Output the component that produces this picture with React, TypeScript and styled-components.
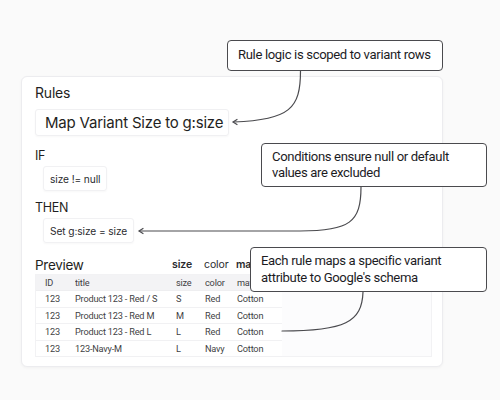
import styled, { createGlobalStyle } from 'styled-components';

const GlobalStyle = createGlobalStyle`
  body {
    margin: 0;
    background: #fafafa;
    font-family: Inter, "Noto Sans", sans-serif;
    color: #1f1f22;
  }
`;

const Page = styled.div`
  position: relative;
  width: 500px;
  height: 400px;
  overflow: hidden;
  box-sizing: border-box;
  padding: 76px 0 0 21px;
  background: #fafafa;
`;

const Card = styled.div`
  width: 422px;
  height: 291px;
  box-sizing: border-box;
  padding: 6px 11px 0 13px;
  background: #fff;
  border: 1px solid #ececef;
  border-radius: 6px;
  box-shadow: 0 1px 3px rgba(0, 0, 0, 0.04);
  display: flex;
  flex-direction: column;
`;

const Title = styled.div`
  font-size: 14px;
  line-height: 20px;
  letter-spacing: -0.2px;
`;

const Label = styled.div<{ $top: number }>`
  font-size: 12.5px;
  line-height: 18px;
  margin-top: ${(p) => p.$top}px;
  letter-spacing: -0.3px;
`;

const RuleName = styled.div`
  margin-top: 6px;
  width: 194px;
  height: 27px;
  box-sizing: border-box;
  padding-left: 9px;
  display: flex;
  align-items: center;
  font-size: 15px;
  letter-spacing: -0.2px;
  border: 1px solid #f0f0f2;
  border-radius: 3px;
  box-shadow: 0 1px 2px rgba(0, 0, 0, 0.03);
`;

const Chip = styled.div`
  margin: 1px 0 0 8px;
  align-self: flex-start;
  height: 25px;
  box-sizing: border-box;
  padding: 0 6px;
  display: flex;
  align-items: center;
  font-size: 10.2px;
  letter-spacing: -0.1px;
  color: #2a2a2e;
  border: 1px solid #f1f1f3;
  border-radius: 3px;
  box-shadow: 0 1px 2px rgba(0, 0, 0, 0.03);
`;

const PreviewHead = styled.div`
  margin-top: 9px;
  display: grid;
  grid-template-columns: 137px 32px 32px 14px;
  align-items: end;
  height: 21px;
`;

const PreviewTitle = styled.span`
  font-size: 13.5px;
  letter-spacing: -0.3px;
`;

const HeadLabel = styled.span<{ $bold?: boolean }>`
  font-size: 10.5px;
  font-weight: ${(p) => (p.$bold ? 600 : 400)};
  color: #2a2a2e;
  padding-bottom: 2px;
  letter-spacing: -0.1px;
  white-space: nowrap;
  overflow: hidden;
`;

const Table = styled.div`
  margin-top: 1px;
  width: 397px;
  height: 83px;
  background: #fcfcfd;
  border: 1px solid #f2f2f4;
  box-sizing: border-box;
`;

const Row = styled.div<{ $head?: boolean }>`
  display: grid;
  grid-template-columns: 30px 101px 29px 32px ${(p) => (p.$head ? '14px' : '45px')};
  align-items: center;
  height: ${(p) => (p.$head ? 16 : 16.5)}px;
  padding-left: 9px;
  width: ${(p) => (p.$head ? 'auto' : '246px')};
  box-sizing: border-box;
  background: ${(p) => (p.$head ? '#f3f3f5' : '#fff')};
  border-bottom: 1px solid ${(p) => (p.$head ? '#eeeef0' : '#f1f1f3')};
  font-family: Roboto, Inter, sans-serif;
  font-size: 9.2px;
  color: #3f3f44;
  letter-spacing: -0.2px;
  white-space: nowrap;
`;

const Cell = styled.span`
  overflow: hidden;
`;

const Callout = styled.div<{ $x: number; $y: number; $w: number; $h: number }>`
  position: absolute;
  left: ${(p) => p.$x}px;
  top: ${(p) => p.$y}px;
  width: ${(p) => p.$w}px;
  height: ${(p) => p.$h}px;
  box-sizing: border-box;
  padding: 0 10px;
  display: flex;
  flex-direction: column;
  justify-content: center;
  background: #fff;
  border: 1px solid #4a4a4e;
  border-radius: 4px;
  font-family: Roboto, Inter, sans-serif;
  font-size: 13.1px;
  line-height: 16.5px;
  letter-spacing: -0.35px;
  color: #1c1c1f;
  white-space: nowrap;
  z-index: 2;
`;

const Arrows = styled.svg`
  position: absolute;
  left: 0;
  top: 0;
  width: 500px;
  height: 400px;
  pointer-events: none;
  z-index: 1;
`;

const rows = [
  ['123', 'Product 123 - Red / S', 'S', 'Red', 'Cotton'],
  ['123', 'Product 123 - Red M', 'M', 'Red', 'Cotton'],
  ['123', 'Product 123 - Red L', 'L', 'Red', 'Cotton'],
  ['123', '123-Navy-M', 'L', 'Navy', 'Cotton'],
];

export default function App() {
  return (
    <Page>
      <GlobalStyle />
      <Card>
        <Title>Rules</Title>
        <RuleName>Map Variant Size to g:size</RuleName>
        <Label $top={11}>IF</Label>
        <Chip>size != null</Chip>
        <Label $top={8}>THEN</Label>
        <Chip>Set g:size = size</Chip>
        <PreviewHead>
          <PreviewTitle>Preview</PreviewTitle>
          <HeadLabel $bold>size</HeadLabel>
          <HeadLabel>color</HeadLabel>
          <HeadLabel $bold>material</HeadLabel>
        </PreviewHead>
        <Table>
          <Row $head>
            <Cell>ID</Cell>
            <Cell>title</Cell>
            <Cell>size</Cell>
            <Cell>color</Cell>
            <Cell>material</Cell>
          </Row>
          {rows.map((r, i) => (
            <Row key={i}>
              {r.map((c, j) => (
                <Cell key={j}>{c}</Cell>
              ))}
            </Row>
          ))}
        </Table>
      </Card>

      <Arrows viewBox="0 0 500 400">
        <g fill="none" stroke="#4a4a4e" strokeWidth="1.2" strokeLinecap="round">
          <path d="M300.5 71 C300.5 108 290 120 234 122" />
          <path d="M237 119.5 L233 122 L237 124.5" />
          <path d="M361 187 C361 222 350 231 300 231 L140 231" />
          <path d="M143 228.5 L139 231 L143 233.5" />
          <path d="M363 292 C362 322 345 331 282 331" />
        </g>
      </Arrows>

      <Callout $x={227} $y={40} $w={216} $h={31}>
        Rule logic is scoped to variant rows
      </Callout>
      <Callout $x={261} $y={143} $w={226} $h={44}>
        <span>Conditions ensure null or default</span>
        <span>values are excluded</span>
      </Callout>
      <Callout $x={250} $y={247} $w={237} $h={45}>
        <span>Each rule maps a specific variant</span>
        <span>attribute to Google's schema</span>
      </Callout>
    </Page>
  );
}
